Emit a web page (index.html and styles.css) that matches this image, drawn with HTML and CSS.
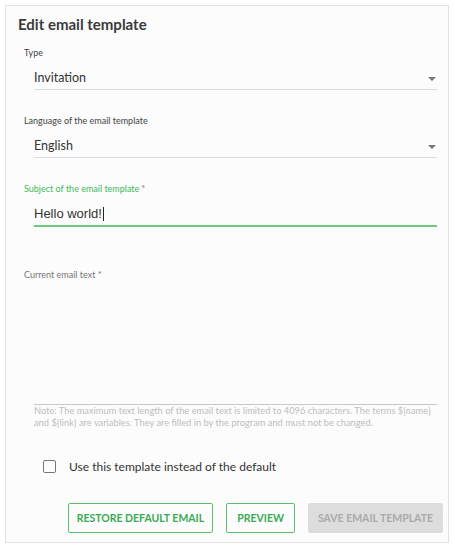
FILE: index.html
```html
<!DOCTYPE html>
<html lang="en">
<head>
  <meta charset="UTF-8" />
  <meta name="viewport" content="width=device-width, initial-scale=1.0"/>
  <title>Edit email template</title>
  <link rel="stylesheet" href="styles.css">
</head>
<body>
  <div class="card">
    <h2 class="title">Edit email template</h2>

    <!-- Type -->
    <div class="field">
      <label class="label">Type</label>
      <div class="select">
        <span>Invitation</span>
        <span class="arrow"></span>
      </div>
    </div>

    <!-- Language -->
    <div class="field">
      <label class="label">Language of the email template</label>
      <div class="select">
        <span>English</span>
        <span class="arrow"></span>
      </div>
    </div>

    <!-- Subject -->
    <div class="field">
      <label class="label focused">Subject of the email template <span class="req">*</span></label>
      <div class="input active">Hello world!<span class="caret"></span></div>
    </div>

    <!-- Body -->
    <div class="field body-field">
      <label class="label muted">Current email text *</label>
      <div class="textarea"></div>
      <p class="note">Note: The maximum text length of the email text is limited to 4096 characters. The terms ${name} and ${link} are variables. They are filled in by the program and must not be changed.</p>
    </div>

    <label class="check">
      <span class="box"></span>
      <span>Use this template instead of the default</span>
    </label>

    <div class="actions">
      <button class="btn outline restore">Restore default email</button>
      <button class="btn outline">Preview</button>
      <button class="btn disabled">Save email template</button>
    </div>
  </div>
</body>
</html>
```

FILE: styles.css
```css
:root {
  --green: #3fb95a;
  --line: #dcdcdc;
  --text: #333333;
}

body {
  margin: 0;
  background: #ffffff;
  font-family: "Lato", "Open Sans", sans-serif;
  color: var(--text);
}

.card {
  margin: 5px 0 0 5px;
  width: 444px;
  height: 538px;
  border: 1px solid #e2e2e2;
  background: #fcfcfc;
  padding: 8px 5px 0 12px;
  box-sizing: border-box;
}

.title {
  margin: 0;
  font-size: 15px;
  font-weight: 700;
  line-height: 20px;
  color: #3a3a3a;
}

.field {
  margin-top: 13px;
  padding: 0 6px;
}

.field + .field {
  margin-top: 25px;
}

.field + .body-field {
  margin-top: 42px;
}

.label {
  display: block;
  font-size: 9px;
  line-height: 12px;
  color: #444;
}

.label.focused {
  color: var(--green);
}

.label.muted {
  color: #777;
}

.req {
  color: #e05050;
}

.select, .input {
  margin: 6px 0 0 10px;
  height: 25px;
  border-bottom: 1px solid var(--line);
  display: flex;
  align-items: center;
  justify-content: space-between;
  font-size: 12.5px;
  color: #333;
  box-sizing: border-box;
  padding-top: 1px;
}

.arrow {
  width: 0;
  height: 0;
  border-left: 4px solid transparent;
  border-right: 4px solid transparent;
  border-top: 4px solid #777;
  margin-right: 1px;
  margin-top: 2px;
}

.input {
  justify-content: flex-start;
  font-family: "Liberation Sans", Arial, sans-serif;
  font-size: 13px;
  border-bottom: 2px solid #6ccc7e;
  height: 26px;
}

.caret {
  display: inline-block;
  width: 1px;
  height: 14px;
  background: #222;
  margin-left: 1px;
}

.textarea {
  margin: 6px 0 0 10px;
  height: 117px;
  border-bottom: 1px solid #c8c8c8;
}

.note {
  margin: 0 0 0 10px;
  font-size: 9.3px;
  line-height: 12px;
  color: #bdbdbd;
}

.check {
  display: flex;
  align-items: center;
  gap: 13px;
  margin: 30px 0 0 25px;
  font-size: 12px;
  color: #333;
}

.box {
  width: 13px;
  height: 13px;
  border: 1.5px solid #777;
  border-radius: 2px;
  box-sizing: border-box;
}

.actions {
  display: flex;
  justify-content: flex-end;
  gap: 13px;
  margin-top: 29px;
}

.btn {
  height: 30px;
  padding: 0 10px;
  font-family: "Lato", sans-serif;
  font-size: 10.5px;
  font-weight: 700;
  text-transform: uppercase;
  border-radius: 2px;
  background: transparent;
}

.btn.restore {
  padding: 0 8px;
}

.outline {
  border: 1px solid #55c16a;
  color: #3aaa55;
}

.disabled {
  border: none;
  background: #dddddd;
  color: #aaaaaa;
}
```
